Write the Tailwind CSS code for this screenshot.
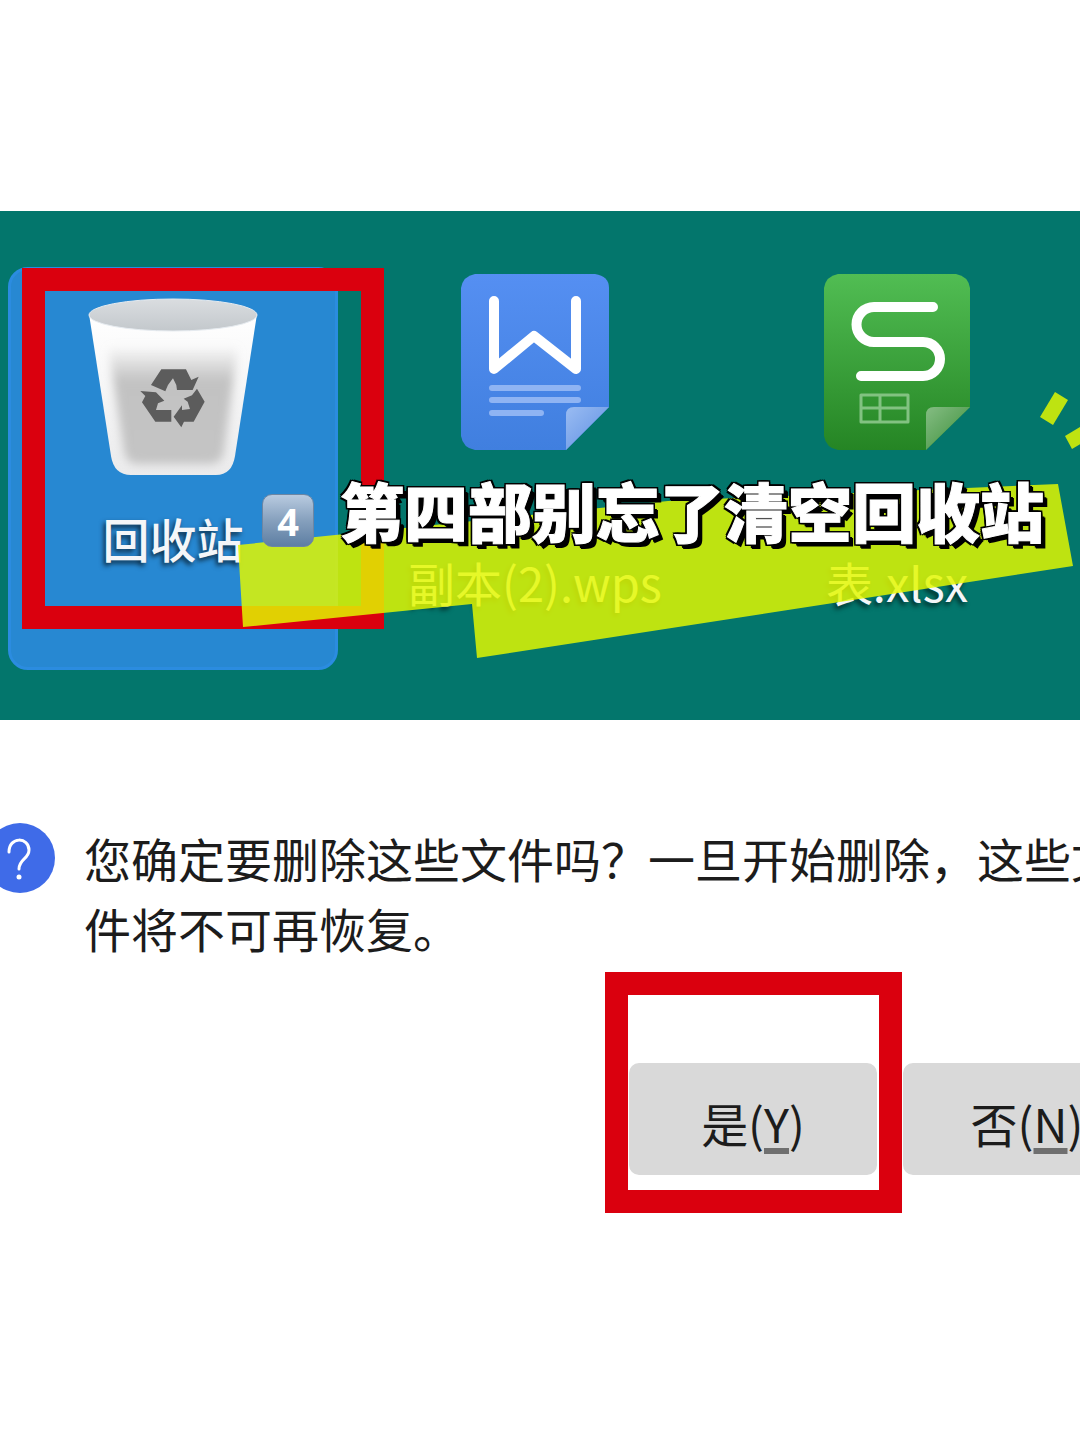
<!DOCTYPE html>
<html lang="zh-CN">
	<head>
		<meta charset="UTF-8" />
		<meta name="viewport" content="width=device-width, initial-scale=1.0" />
		<title>清空回收站</title>
		<script src="https://cdn.jsdelivr.net/npm/@tailwindcss/browser@4"></script>
	</head>
	<body class="min-h-screen overflow-x-hidden bg-white pt-[211px] font-['Noto_Sans_CJK_SC',sans-serif] text-[47px]">
		<!-- desktop -->
		<section class="relative overflow-hidden bg-[#03766c] pt-14 pr-[18px] pb-[50px] pl-2">
			<div class="grid grid-cols-3 gap-8 text-center leading-10 text-[#f4f6f8]">
				<!-- recycle bin -->
				<div class="flex h-[403px] flex-col items-center rounded-[20px] border-[3px] border-[#2b8ce0] bg-[#2788d2] pt-[26px]">
					<svg class="h-[182px] w-[174px]" viewBox="0 0 174 182">
						<defs>
							<linearGradient id="bin-body" x1="0" y1="0" x2="0" y2="1">
								<stop offset="0" stop-color="#ffffff" />
								<stop offset="1" stop-color="#ebebec" />
							</linearGradient>
							<linearGradient id="bin-fill" x1="0" y1="0" x2="0" y2="1">
								<stop offset="0" stop-color="#c2c2c2" stop-opacity="0" />
								<stop offset="0.3" stop-color="#c2c2c2" />
								<stop offset="1" stop-color="#c4c4c4" />
							</linearGradient>
							<linearGradient id="bin-lid" x1="0" y1="0" x2="0" y2="1">
								<stop offset="0" stop-color="#dadde0" />
								<stop offset="1" stop-color="#c3c8cc" />
							</linearGradient>
							<filter id="bin-soft" x="-20%" y="-20%" width="140%" height="140%">
								<feGaussianBlur stdDeviation="5" />
							</filter>
						</defs>
						<path d="M3 18L25 160Q28 179 45 179H130Q146 179 149 160L171 18Z" fill="url(#bin-body)" />
						<path d="M22 50H152L138 155Q136 168 124 168H52Q40 168 38 155Z" fill="url(#bin-fill)" filter="url(#bin-soft)" />
						<ellipse cx="87" cy="19" rx="84" ry="16" fill="url(#bin-lid)" stroke="#e6ebf0" />
						<g fill="#5c5c5c" transform="translate(-84 -96) scale(.3333)">
							<path d="M478 508H552L568 540L590 530L572 570L525 570L523 555L513 535L498 555L490 574L447 555Z" />
							<path d="M415 573L462 577L487 602L468 610L462 630H508V665H460L420 607L430 588Z" />
							<path d="M585 566L608 605L575 665H546L538 682L515 650L540 616V630L564 627L557 605L545 596L570 586Z" />
						</g>
					</svg>
					<p class="mt-10 font-medium text-shadow-[-2px_3px_5px_#000000b3]">回收站</p>
				</div>
				<!-- writer document -->
				<div class="flex flex-col items-center pt-[7px]">
					<svg class="h-44 w-[148px]" viewBox="0 0 148 176">
						<defs>
							<linearGradient id="doc-blue" x1="0" y1="0" x2="0" y2="1">
								<stop offset="0" stop-color="#558ff2" />
								<stop offset="1" stop-color="#407fdf" />
							</linearGradient>
							<linearGradient id="fold-blue" x1="0" y1="0" x2="1" y2="1">
								<stop offset="0" stop-color="#9abcf2" />
								<stop offset="0.5" stop-color="#7ba5ea" />
							</linearGradient>
						</defs>
						<path d="M14 0H134Q148 2 148 14V133L105 176H14Q2 174 0 162V14Q2 2 14 0Z" fill="url(#doc-blue)" />
						<path d="M148 133L105 176V141Q105 133 113 133Z" fill="url(#fold-blue)" />
						<path d="M33 27V95L73 62L115 95V27" fill="none" stroke="#fff" stroke-width="10" stroke-linecap="round" stroke-linejoin="round" />
						<path d="M31 114H117M31 126H117M31 139H80" stroke="#8fb4f3" stroke-width="6" stroke-linecap="round" />
					</svg>
					<p class="mt-28 text-shadow-[-2px_3px_5px_#000000b3]">副本(2).wps</p>
				</div>
				<!-- spreadsheet -->
				<div class="flex flex-col items-center pt-[7px]">
					<svg class="h-44 w-[146px]" viewBox="0 0 146 176">
						<defs>
							<linearGradient id="doc-green" x1="0" y1="0" x2="0" y2="1">
								<stop offset="0" stop-color="#51bd53" />
								<stop offset="1" stop-color="#258524" />
							</linearGradient>
							<linearGradient id="fold-green" x1="0" y1="0" x2="1" y2="1">
								<stop offset="0" stop-color="#85bd83" />
								<stop offset="0.5" stop-color="#5fa55d" />
							</linearGradient>
						</defs>
						<path d="M14 0H132Q144 2 146 14V133L102 176H14Q2 174 0 162V14Q2 2 14 0Z" fill="url(#doc-green)" />
						<path d="M146 133L102 176V141Q102 133 110 133Z" fill="url(#fold-green)" />
						<path d="M109 33H50A17 17 0 0 0 50 68H99A17 17 0 0 1 99 102H37" fill="none" stroke="#fff" stroke-width="10" stroke-linecap="round" />
						<path d="M37 121H84V148H37ZM56 121V148M37 134H84" fill="none" stroke="#82c281" stroke-width="3" stroke-linejoin="round" />
					</svg>
					<p class="mt-28 text-shadow-[-2px_3px_5px_#000000b3]">表.xlsx</p>
				</div>
			</div>

			<!-- marker frame -->
			<div class="absolute top-[57px] left-[22px] h-[361px] w-[362px] border-[23px] border-[#da000e]"></div>

			<!-- caption banner -->
			<svg class="absolute top-0 left-0 h-[509px] w-[1080px]" viewBox="0 0 1080 509">
				<g fill="#e2f800" fill-opacity=".84">
					<path d="M238 334L668 290L1058 273L1073 355L477 447L472 393L243 416Z" />
					<path d="M1055 181L1068 189L1053 214L1040 206Z" />
					<path d="M1065 225L1090 210L1097 223L1072 238Z" />
				</g>
			</svg>
			<div class="absolute top-[267px] left-[262px] flex items-start gap-[26px] whitespace-nowrap">
				<span class="mt-4 flex h-[53px] w-[52px] items-center justify-center rounded-[10px] border border-[#6d86a3] bg-linear-to-b from-[#b9cbe0] via-[#86a0bd] to-[#5e7fa3] font-['Open_Sans',sans-serif] text-[38px] leading-none font-bold text-white">4</span>
				<h1 class="text-[64px] leading-[62px] font-black text-white [-webkit-text-stroke:1px_white] text-shadow-[2px_0_0_#000,-2px_0_0_#000,0_2px_0_#000,0_-2px_0_#000,2px_2px_0_#000,-2px_-2px_0_#000,2px_-2px_0_#000,-2px_2px_0_#000,4px_4px_0_#000,5px_5px_0_#000]">第四部别忘了清空回收站</h1>
			</div>
		</section>

		<!-- confirm dialog -->
		<section class="relative overflow-hidden pt-[103px] pb-60 text-[#1c1c1c]">
			<div class="flex items-start gap-[29px]">
				<svg class="-ml-[15px] h-[70px] w-[70px] shrink-0" viewBox="0 0 70 70">
					<circle cx="35" cy="35" r="35" fill="#3f6be8" />
					<path d="M24 29C24 13 44 14 44 27C44 36 34 36 34 46" fill="none" stroke="#fff" stroke-width="3" stroke-linecap="round" />
					<circle cx="34" cy="54" r="2.5" fill="#fff" />
				</svg>
				<p class="w-[1040px] shrink-0 leading-[70px]">您确定要删除这些文件吗？一旦开始删除，这些文件将不可再恢复。</p>
			</div>
			<div class="mt-[100px] flex gap-[26px] pl-[629px]">
				<button class="h-28 w-[248px] shrink-0 rounded-[10px] bg-[#d9d9d9] pt-2 leading-[60px]">是(<span class="underline decoration-[#6f6f6f] decoration-[6px] underline-offset-[5px]">Y</span>)</button>
				<button class="h-28 w-[248px] shrink-0 rounded-[10px] bg-[#d9d9d9] pt-2 leading-[60px]">否(<span class="underline decoration-[#6f6f6f] decoration-[6px] underline-offset-[5px]">N</span>)</button>
			</div>
			<!-- marker frame -->
			<div class="pointer-events-none absolute top-[252px] left-[605px] h-[241px] w-[297px] border-[23px] border-[#da000e]"></div>
		</section>
	</body>
</html>
